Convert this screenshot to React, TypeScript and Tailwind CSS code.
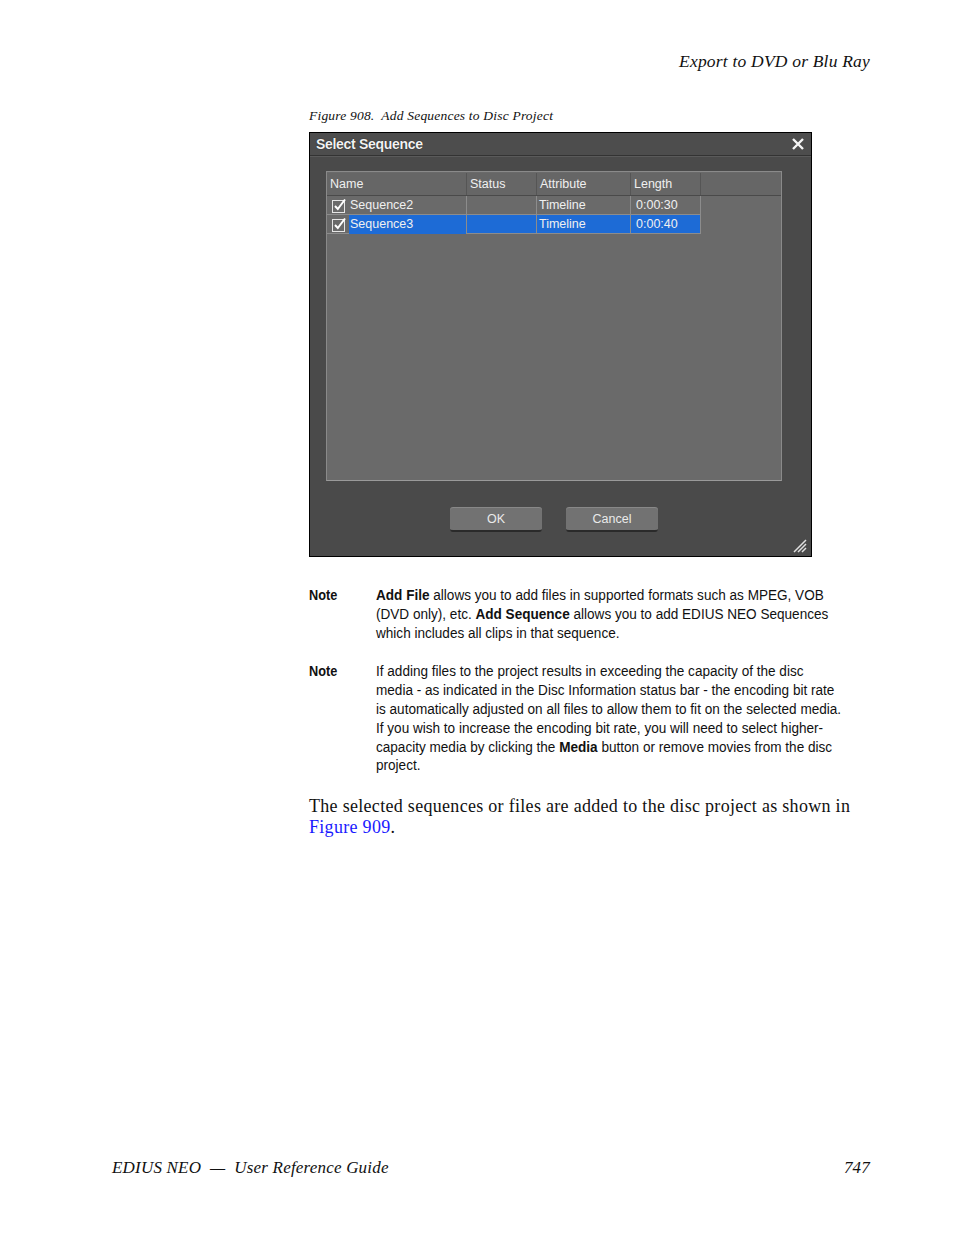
import React from "react";

type Row = {
    name: string;
    status: string;
    attribute: string;
    length: string;
    selected?: boolean;
};

const ROWS: Row[] = [
    { name: "Sequence2", status: "", attribute: "Timeline", length: "0:00:30" },
    { name: "Sequence3", status: "", attribute: "Timeline", length: "0:00:40", selected: true },
];

const serif = "font-['Liberation_Serif',serif]";
const sans = "font-['Liberation_Sans',sans-serif]";
const ui = "font-['Liberation_Sans','DejaVu_Sans',sans-serif]";

// note lines kept as typeset in the guide
const NOTE_1: React.ReactNode[] = [
    <><b>Add File</b> allows you to add files in supported formats such as MPEG, VOB</>,
    <>(DVD only), etc. <b>Add Sequence</b> allows you to add EDIUS NEO Sequences</>,
    <>which includes all clips in that sequence.</>,
];

const NOTE_2: React.ReactNode[] = [
    <>If adding files to the project results in exceeding the capacity of the disc</>,
    <>media - as indicated in the Disc Information status bar - the encoding bit rate</>,
    <>is automatically adjusted on all files to allow them to fit on the selected media.</>,
    <>If you wish to increase the encoding bit rate, you will need to select higher-</>,
    <>capacity media by clicking the <b>Media</b> button or remove movies from the disc</>,
    <>project.</>,
];

function CheckBox() {
    return (
        <svg width="15" height="15" viewBox="0 0 15 15" className="shrink-0">
            <rect x="0.5" y="2.5" width="12" height="12" fill="none" stroke="#e6e6e6" strokeWidth="1" />
            <path d="M3 8 L5.8 11 L13 1.5" fill="none" stroke="#ffffff" strokeWidth="2" />
        </svg>
    );
}

function SelectSequenceDialog() {
    return (
        <div className={`flex h-[425px] w-[503px] flex-col border border-black bg-[#4a4a4a] ${ui}`}>
            {/* title bar */}
            <div className="flex h-[23px] items-center justify-between border-b border-[#333] bg-[#4d4d4d] pl-[6px] pr-[6px]">
                <span className="text-[14px] font-bold tracking-[-0.3px] text-[#f2f2f2] [text-shadow:0_0_1px_#000]">
                    Select Sequence
                </span>
                <svg width="14" height="14" viewBox="0 0 14 14">
                    <path d="M2 2 L12 12 M12 2 L2 12" stroke="#f5f5f5" strokeWidth="2.4" />
                </svg>
            </div>

            <div className="flex flex-1 flex-col border-t border-[#5a5a5a] pl-[16px] pr-[29px] pt-[14px]">
                {/* list */}
                <div className="h-[310px] border border-[#8a8a8a] border-b-[#9a9a9a] bg-[#6a6a6a] pt-[1px] text-[12.5px] text-[#f0f0f0]">
                    <div className="flex h-[23px] items-center border-b border-[#4a4a4a] bg-[#666]">
                        <div className="w-[140px] border-r border-[#555] px-[3px] leading-[22px]">Name</div>
                        <div className="w-[70px] border-r border-[#555] px-[3px] leading-[22px]">Status</div>
                        <div className="w-[94px] border-r border-[#555] px-[3px] leading-[22px]">Attribute</div>
                        <div className="w-[70px] border-r border-[#555] px-[3px] leading-[22px]">Length</div>
                    </div>
                    {ROWS.map((r) => (
                        <div key={r.name} className="flex h-[19px] w-[374px] border-b border-[#8c8c8c]">
                            <div className="flex w-[140px] items-center gap-[2px] border-r border-[#8c8c8c] pl-[5px]">
                                <CheckBox />
                                <span className={`flex-1 pl-[1px] leading-[19px] ${r.selected ? "bg-[#1d6bd6]" : ""}`}>
                                    {r.name}
                                </span>
                            </div>
                            <div className={`w-[70px] border-r border-[#8c8c8c] ${r.selected ? "bg-[#1d6bd6]" : ""}`}>
                                {r.status}
                            </div>
                            <div className={`w-[94px] border-r border-[#8c8c8c] pl-[2px] leading-[19px] ${r.selected ? "bg-[#1d6bd6]" : ""}`}>
                                {r.attribute}
                            </div>
                            <div className={`w-[70px] border-r border-[#8c8c8c] pl-[5px] leading-[19px] ${r.selected ? "bg-[#1d6bd6]" : ""}`}>
                                {r.length}
                            </div>
                        </div>
                    ))}
                </div>

                {/* buttons */}
                <div className="mt-[27px] flex justify-center gap-[24px]">
                    <button className="h-[24px] w-[92px] rounded-[3px] border-b-2 border-[#2a2a2a] bg-[#727272] text-[12.5px] text-[#eaeaea] shadow-[0_-1px_0_#888]">
                        OK
                    </button>
                    <button className="h-[24px] w-[92px] rounded-[3px] border-b-2 border-[#2a2a2a] bg-[#727272] text-[12.5px] text-[#eaeaea] shadow-[0_-1px_0_#888]">
                        Cancel
                    </button>
                </div>

                <div className="-mr-[25px] mt-auto flex justify-end pb-[3px]">
                    <svg width="15" height="15" viewBox="0 0 15 15">
                        <path d="M14 2 L2 14 M14 6 L6 14 M14 10 L10 14" stroke="#e0e0e0" strokeWidth="1.5" />
                    </svg>
                </div>
            </div>
        </div>
    );
}

function Note({ lines }: { lines: React.ReactNode[] }) {
    return (
        <div className={`flex text-[15.5px] leading-[18.8px] text-[#111] ${sans}`}>
            <div className="w-[67px] shrink-0">
                <div className="w-[40px] origin-left scale-x-[0.82] font-bold">Note</div>
            </div>
            <div className="w-[531px] shrink-0 origin-left scale-x-[0.875] whitespace-nowrap">
                {lines.map((line, i) => (
                    <div key={i}>{line}</div>
                ))}
            </div>
        </div>
    );
}

export default function App() {
    return (
        <div className="relative h-[1235px] w-[954px] overflow-hidden bg-white text-[#111]">
            <div className="flex h-full flex-col">
                <header className={`pr-[84px] pt-[50px] text-right text-[17.5px] italic leading-[22px] tracking-[0.2px] ${serif}`}>
                    Export to DVD or Blu Ray
                </header>

                <main className="flex flex-1 flex-col pl-[309px]">
                    <div className={`mt-[35px] text-[13.5px] italic leading-[18px] tracking-[0.2px] ${serif}`}>
                        Figure 908.&nbsp; Add Sequences to Disc Project
                    </div>
                    <div className="mt-[7px]">
                        <SelectSequenceDialog />
                    </div>

                    <div className="mt-[29px] flex flex-col gap-[20px]">
                        <Note lines={NOTE_1} />
                        <Note lines={NOTE_2} />
                    </div>

                    <p className={`mt-[21px] w-[548px] text-[18px] leading-[21px] tracking-[0.3px] ${serif}`}>
                        The selected sequences or files are added to the disc project as shown in{" "}
                        <span className="text-[#1a1aff]">Figure 909</span>.
                    </p>
                </main>

                <footer className={`flex justify-between pb-[56px] pl-[112px] pr-[84px] text-[17px] italic leading-[22px] tracking-[0.2px] ${serif}`}>
                    <span>EDIUS NEO&nbsp; —&nbsp; User Reference Guide</span>
                    <span>747</span>
                </footer>
            </div>
        </div>
    );
}
